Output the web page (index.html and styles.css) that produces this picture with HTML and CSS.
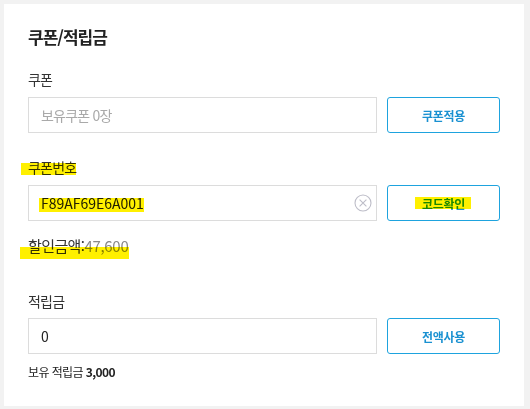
FILE: index.html
```html
<!DOCTYPE html>
<html lang="ko">
<head>
<meta charset="utf-8">
<title>쿠폰/적립금</title>
<link rel="stylesheet" href="styles.css">
</head>
<body>
<section class="card">
  <h2 class="title">쿠폰/적립금</h2>

  <div class="label">쿠폰</div>
  <div class="row">
    <input class="field" type="text" placeholder="보유쿠폰 0장">
    <button class="btn" type="button">쿠폰적용</button>
  </div>

  <div class="label label-gap"><span class="hl hl-label">쿠폰번호</span></div>
  <div class="row">
    <div class="field field-code">
      <span class="hl hl-value">F89AF69E6A001</span>
      <svg class="clear" width="18" height="18" viewBox="0 0 18 18" aria-hidden="true">
        <circle cx="9" cy="9" r="8" fill="none" stroke="#bdbdc8" stroke-width="1.1"/>
        <path d="M5.6 5.6 L12.4 12.4 M12.4 5.6 L5.6 12.4" stroke="#bdbdc8" stroke-width="1.1" fill="none"/>
      </svg>
    </div>
    <button class="btn" type="button"><span class="hl hl-btn">코드확인</span></button>
  </div>

  <div class="discount"><span class="hl hl-discount">할인금액:<span class="amount">47,600</span></span></div>

  <div class="label label-gap2">적립금</div>
  <div class="row">
    <input class="field field-value" type="text" value="0">
    <button class="btn" type="button">전액사용</button>
  </div>
  <div class="note">보유 적립금 <strong>3,000</strong></div>
</section>
</body>
</html>
```

FILE: styles.css
```css
* { box-sizing: border-box; }

html, body {
  margin: 0;
  padding: 0;
  background: #f2f2f2;
}

body {
  padding: 4px 6px 3px 4px;
  font-family: "Noto Sans CJK KR", "Noto Sans", sans-serif;
  color: #333;
}

.card {
  background: #fff;
  width: 520px;
  height: 402px;
  padding: 21px 24px 0 24px;
}

.title {
  margin: 0;
  font-size: 17px;
  line-height: 24px;
  font-weight: 700;
  color: #222;
  letter-spacing: -1px;
}

.label {
  margin: 20px 0 8px;
  font-size: 14px;
  line-height: 20px;
  color: #333;
  letter-spacing: -0.8px;
}

.label-gap { margin-top: 24px; }
.label-gap2 { margin-top: 34px; margin-bottom: 7px; }

.row {
  display: flex;
  gap: 10px;
}

.field {
  width: 349px;
  height: 36px;
  border: 1px solid #dcdcdc;
  border-radius: 0;
  padding: 0 0 0 12px;
  font-family: inherit;
  font-size: 14px;
  color: #222;
  background: #fff;
  outline: none;
  letter-spacing: -0.5px;
}

.field::placeholder {
  color: #a9a9a9;
  letter-spacing: -0.8px;
}

.field-code {
  display: flex;
  align-items: center;
  justify-content: space-between;
  padding-right: 4px;
  letter-spacing: 0;
}

.field-value { letter-spacing: 0; }

.clear { display: block; }

.btn {
  width: 113px;
  height: 36px;
  border: 1px solid #1ea3de;
  border-radius: 3px;
  background: #fff;
  color: #1a91d1;
  font-family: inherit;
  font-size: 12px;
  font-weight: 700;
  letter-spacing: -0.3px;
  padding: 0;
  cursor: pointer;
}

.discount {
  margin-top: 14px;
  font-size: 15px;
  line-height: 22px;
  color: #333;
  letter-spacing: -0.6px;
}

.amount {
  color: #8a8a8a;
  letter-spacing: -0.3px;
}

.note {
  margin-top: 9px;
  font-size: 12px;
  line-height: 18px;
  color: #222;
  letter-spacing: -0.6px;
}

.note strong { font-weight: 700; }

/* highlighter marks drawn over the text */
.hl {
  position: relative;
  display: inline-block;
}

.field-code .hl-value { line-height: 20px; }

.hl::after {
  content: "";
  position: absolute;
  background: #fff000;
  mix-blend-mode: multiply;
  pointer-events: none;
}

.hl-label::after { left: -7px; right: 0; top: 6px; height: 12px; }
.hl-value::after { left: -2px; right: 0; top: 5px; height: 14px; }
.hl-btn::after { left: -7px; right: -6px; top: 2px; height: 12px; }
.hl-discount::after { left: -8px; right: -1px; top: 12px; height: 12px; }
```
